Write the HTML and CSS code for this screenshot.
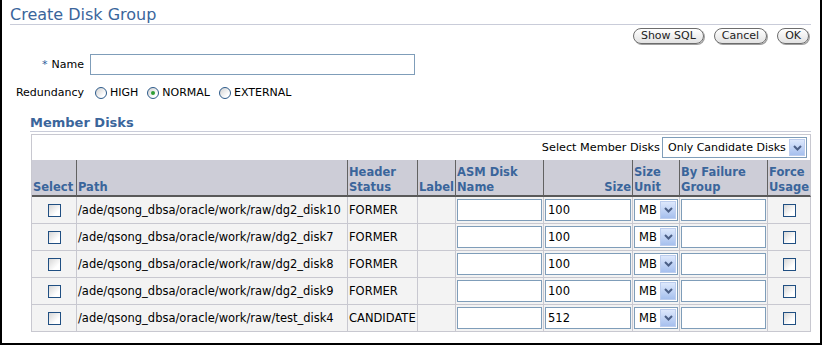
FILE: index.html
```html
<!DOCTYPE html>
<html>
<head>
<meta charset="utf-8">
<title>Create Disk Group</title>
<link rel="stylesheet" href="styles.css">
</head>
<body>
<div class="frame">
  <div class="page-title">Create Disk Group</div>
  <div class="actions">
    <button class="btn">Show SQL</button>
    <button class="btn">Cancel</button>
    <button class="btn">OK</button>
  </div>
  <div class="form">
    <span class="lbl"><span class="req">*</span>Name</span>
    <input class="tf tf-name" type="text" value="">
    <span class="lbl">Redundancy</span>
    <div class="radios">
      <span class="radio-item first"><span class="radio"></span>HIGH</span>
      <span class="radio-item"><span class="radio on"></span>NORMAL</span>
      <span class="radio-item"><span class="radio"></span>EXTERNAL</span>
    </div>
  </div>
  <div class="members">
    <div class="section-title">Member Disks</div>
    <div class="grid">
      <div class="toolbar">
        <span class="tb-label">Select Member Disks</span>
        <span class="sel sel-wide"><span class="sel-text">Only Candidate Disks</span><span class="sel-btn"><svg width="9" height="6" viewBox="0 0 9 6"><path d="M1 1l3.5 3.5L8 1" fill="none" stroke="#4b5f86" stroke-width="2"/></svg></span></span>
      </div>
      <div class="th">Select</div>
      <div class="th">Path</div>
      <div class="th">Header Status</div>
      <div class="th">Label</div>
      <div class="th">ASM Disk Name</div>
      <div class="th th-right">Size</div>
      <div class="th">Size Unit</div>
      <div class="th">By Failure Group</div>
      <div class="th th-last">Force Usage</div>

      <div class="td td-c"><span class="cb"></span></div>
      <div class="td">/ade/qsong_dbsa/oracle/work/raw/dg2_disk10</div>
      <div class="td">FORMER</div>
      <div class="td"></div>
      <div class="td td-in"><input class="tf" type="text" value=""></div>
      <div class="td td-in"><input class="tf" type="text" value="100"></div>
      <div class="td td-in"><span class="sel sel-unit"><span class="sel-text">MB</span><span class="sel-btn"><svg width="9" height="6" viewBox="0 0 9 6"><path d="M1 1l3.5 3.5L8 1" fill="none" stroke="#4b5f86" stroke-width="2"/></svg></span></span></div>
      <div class="td td-in"><input class="tf" type="text" value=""></div>
      <div class="td td-c"><span class="cb"></span></div>

      <div class="td td-c"><span class="cb"></span></div>
      <div class="td">/ade/qsong_dbsa/oracle/work/raw/dg2_disk7</div>
      <div class="td">FORMER</div>
      <div class="td"></div>
      <div class="td td-in"><input class="tf" type="text" value=""></div>
      <div class="td td-in"><input class="tf" type="text" value="100"></div>
      <div class="td td-in"><span class="sel sel-unit"><span class="sel-text">MB</span><span class="sel-btn"><svg width="9" height="6" viewBox="0 0 9 6"><path d="M1 1l3.5 3.5L8 1" fill="none" stroke="#4b5f86" stroke-width="2"/></svg></span></span></div>
      <div class="td td-in"><input class="tf" type="text" value=""></div>
      <div class="td td-c"><span class="cb"></span></div>

      <div class="td td-c"><span class="cb"></span></div>
      <div class="td">/ade/qsong_dbsa/oracle/work/raw/dg2_disk8</div>
      <div class="td">FORMER</div>
      <div class="td"></div>
      <div class="td td-in"><input class="tf" type="text" value=""></div>
      <div class="td td-in"><input class="tf" type="text" value="100"></div>
      <div class="td td-in"><span class="sel sel-unit"><span class="sel-text">MB</span><span class="sel-btn"><svg width="9" height="6" viewBox="0 0 9 6"><path d="M1 1l3.5 3.5L8 1" fill="none" stroke="#4b5f86" stroke-width="2"/></svg></span></span></div>
      <div class="td td-in"><input class="tf" type="text" value=""></div>
      <div class="td td-c"><span class="cb"></span></div>

      <div class="td td-c"><span class="cb"></span></div>
      <div class="td">/ade/qsong_dbsa/oracle/work/raw/dg2_disk9</div>
      <div class="td">FORMER</div>
      <div class="td"></div>
      <div class="td td-in"><input class="tf" type="text" value=""></div>
      <div class="td td-in"><input class="tf" type="text" value="100"></div>
      <div class="td td-in"><span class="sel sel-unit"><span class="sel-text">MB</span><span class="sel-btn"><svg width="9" height="6" viewBox="0 0 9 6"><path d="M1 1l3.5 3.5L8 1" fill="none" stroke="#4b5f86" stroke-width="2"/></svg></span></span></div>
      <div class="td td-in"><input class="tf" type="text" value=""></div>
      <div class="td td-c"><span class="cb"></span></div>

      <div class="td td-c"><span class="cb"></span></div>
      <div class="td">/ade/qsong_dbsa/oracle/work/raw/test_disk4</div>
      <div class="td">CANDIDATE</div>
      <div class="td"></div>
      <div class="td td-in"><input class="tf" type="text" value=""></div>
      <div class="td td-in"><input class="tf" type="text" value="512"></div>
      <div class="td td-in"><span class="sel sel-unit"><span class="sel-text">MB</span><span class="sel-btn"><svg width="9" height="6" viewBox="0 0 9 6"><path d="M1 1l3.5 3.5L8 1" fill="none" stroke="#4b5f86" stroke-width="2"/></svg></span></span></div>
      <div class="td td-in"><input class="tf" type="text" value=""></div>
      <div class="td td-c"><span class="cb"></span></div>
    </div>
  </div>
</div>
</body>
</html>
```
FILE: styles.css
```css
* { box-sizing: border-box; }
body {
  margin: 0;
  background: #fff;
  color: #000;
  font-family: "DejaVu Sans", Verdana, sans-serif;
  font-size: 11px;
}
.frame {
  width: 822px;
  height: 345px;
  border: 2px solid #000;
  border-top: 0;
  padding: 0 9px 0 8px;
}
.page-title {
  height: 25px;
  padding-top: 6px;
  font-size: 16px;
  line-height: 18px;
  color: #3a659b;
  border-bottom: 1px solid #c9ccd9;
}
.actions {
  display: flex;
  justify-content: flex-end;
  gap: 10px;
  margin-top: 3px;
  padding-right: 2px;
}
.btn {
  height: 16px;
  padding: 0 7px;
  border: 1px solid #6c6c6c;
  border-radius: 8px;
  background: linear-gradient(#ffffff, #e2e2e2);
  box-shadow: 1px 1px 0 #a0a0a0;
  font-family: "DejaVu Sans", Verdana, sans-serif;
  font-size: 11px;
  line-height: 14px;
  color: #222;
}
.form {
  display: grid;
  grid-template-columns: 74px auto;
  grid-auto-rows: 21px;
  column-gap: 6px;
  row-gap: 7px;
  align-items: center;
  justify-content: start;
  margin-top: 10px;
}
.lbl { text-align: right; }
.req { color: #2b5d9a; margin-right: 4px; }
.tf {
  display: block;
  width: 100%;
  height: 22px;
  margin: 0;
  padding: 0 2px;
  border: 1px solid #7f9db9;
  background: #fff;
  font-family: "DejaVu Sans", Verdana, sans-serif;
  font-size: 11.5px;
  color: #000;
  outline: none;
}
.tf-name { width: 325px; height: 21px; }
.radios { display: flex; align-items: center; }
.radio-item { display: flex; align-items: center; margin-left: 9px; }
.radio-item.first { margin-left: 5px; }
.radio {
  position: relative;
  width: 12px;
  height: 12px;
  margin-right: 3px;
  border: 1px solid #2c5a8a;
  border-radius: 50%;
  background: linear-gradient(135deg, #d2d2d2, #ffffff 75%);
}
.radio.on::after {
  content: "";
  position: absolute;
  left: 3px;
  top: 3px;
  width: 4px;
  height: 4px;
  border-radius: 50%;
  background: #2f9e35;
}
.members { margin: 12px 0 0 20px; }
.section-title {
  font-size: 13px;
  font-weight: bold;
  line-height: 16px;
  color: #3a659b;
  border-bottom: 1px solid #c9ccd9;
}
.grid {
  display: grid;
  grid-template-columns: 45px 271px 70px 38px 88px 89px 47px 88px 43px;
  margin: 2px 0 0 1px;
  border-left: 1px solid #c8c8d0;
  border-top: 1px solid #c8c8d0;
}
.toolbar {
  grid-column: 1 / -1;
  height: 25px;
  display: flex;
  justify-content: flex-end;
  align-items: center;
  gap: 2px;
  padding-right: 3px;
  border-right: 1px solid #c8c8d0;
  font-size: 11.25px;
}
.sel {
  display: flex;
  align-items: center;
  height: 22px;
  border: 1px solid #7f9db9;
  background: #fff;
  padding-left: 4px;
  font-size: 11.5px;
}
.sel-wide { width: 145px; height: 21px; font-size: 11px; padding-left: 5px; }
.sel-unit { width: 44px; }
.sel-btn {
  margin-left: auto;
  margin-right: 1px;
  width: 16px;
  height: 18px;
  display: flex;
  align-items: center;
  justify-content: center;
  background: linear-gradient(#dde8fc, #a6c0ee);
  border: 1px solid #bccdee;
}
.sel-wide .sel-btn { height: 17px; }
.th {
  height: 37px;
  display: flex;
  align-items: flex-end;
  padding: 0 0 0 1px;
  background: #cdcdd7;
  border-right: 1px solid #626262;
  border-bottom: 2px solid #595959;
  color: #3a659b;
  font-weight: bold;
  font-size: 11.5px;
  line-height: 15px;
}
.th-right { justify-content: flex-end; text-align: right; padding-right: 1px; }
.th-last { border-right-color: #c8c8d0; }
.td {
  height: 27px;
  display: flex;
  align-items: center;
  padding: 0 0 0 1px;
  background: #f3f3f3;
  border-right: 1px solid #c8c8d0;
  border-bottom: 1px solid #c8c8d0;
  font-size: 11.5px;
  white-space: nowrap;
}
.td-in { padding: 0 1px; }
.td-c { justify-content: center; }
.cb {
  width: 13px;
  height: 13px;
  border: 1px solid #204f82;
  background: linear-gradient(135deg, #d6d6d6, #ffffff 70%);
}
```
